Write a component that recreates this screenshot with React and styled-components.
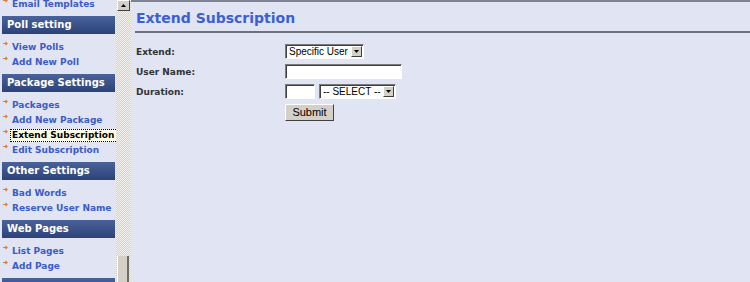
import React from 'react';
import styled, { createGlobalStyle } from 'styled-components';

const GlobalStyle = createGlobalStyle`
  html, body {
    margin: 0;
    padding: 0;
    background: #e0e4f3;
    font-family: "DejaVu Sans", Verdana, sans-serif;
  }
`;

const Page = styled.div`
  display: flex;
  width: 750px;
  height: 282px;
  overflow: hidden;
  background: #e0e4f3;
`;

const SideFrame = styled.div`
  display: flex;
  width: 131px;
  flex-shrink: 0;
`;

const SideMenu = styled.div`
  width: 116px;
  overflow: hidden;
`;

const MenuInner = styled.div`
  margin-top: -3px;
`;

const Group = styled.div`
  padding-bottom: 4px;
`;

const GroupHeader = styled.div`
  margin-left: 2px;
  width: 113px;
  height: 18px;
  line-height: 18px;
  padding-left: 5px;
  box-sizing: border-box;
  background: linear-gradient(#4a629a, #2b4378);
  color: #fff;
  font-size: 10px;
  font-weight: bold;
  margin-bottom: 6px;
`;

const Item = styled.div`
  position: relative;
  height: 15px;
  line-height: 15px;
  padding-left: 12px;
  font-size: 9px;
  font-weight: bold;
  white-space: nowrap;
  color: ${p => (p.$active ? '#000' : '#3a5cc8')};
`;

const ItemLabel = styled.span`
  display: inline-block;
  line-height: 11px;
  padding: 0 3px 0 1px;
  margin-left: -2px;
  border: 1px dotted ${p => (p.$active ? '#000' : 'transparent')};
  background: ${p => (p.$active ? '#fffde6' : 'transparent')};
`;

const Bullet = styled.svg`
  position: absolute;
  left: 3px;
  top: 1px;
`;

const ScrollTrack = styled.div`
  width: 15px;
  display: flex;
  flex-direction: column;
  justify-content: space-between;
  background-color: #f4f3ef;
  background-image: conic-gradient(#d4d0c8 25%, transparent 0 50%, #d4d0c8 0 75%, transparent 0);
  background-size: 2px 2px;
`;

const ScrollButton = styled.div`
  width: 13px;
  height: 11px;
  margin-left: 1px;
  background: #d4d0c8;
  border: 1px solid;
  border-color: #fff #404040 #404040 #fff;
  box-sizing: border-box;
  display: flex;
  align-items: center;
  justify-content: center;
`;

const ScrollThumb = styled.div`
  width: 12px;
  height: 26px;
  margin-left: 1px;
  background: #d4d0c8;
  border-right: 2px solid #6e6c66;
  border-left: 1px solid #fff;
  box-sizing: border-box;
`;

const Main = styled.div`
  flex: 1;
  border-top: 2px solid #7e8393;
  padding: 0 0 0 4px;
`;

const Title = styled.h1`
  margin: 0;
  padding: 8px 0 5px 1px;
  font-size: 14px;
  font-weight: bold;
  color: #3d5fd6;
  border-bottom: 2px solid #6d717e;
`;

const Form = styled.div`
  display: grid;
  grid-template-columns: 150px auto;
  row-gap: 5px;
  align-items: center;
  padding: 11px 0 0 1px;
`;

const Label = styled.div`
  font-size: 9px;
  font-weight: bold;
  color: #333;
`;

const Controls = styled.div`
  display: flex;
  gap: 4px;
  align-items: center;
  margin-left: -1px;
`;

const SelectBox = styled.div`
  width: ${p => p.$w}px;
  height: 15px;
  box-sizing: border-box;
  background: #fff;
  border: 1px solid;
  border-color: #7a7a7a #fff #fff #7a7a7a;
  box-shadow: inset 1px 1px 0 #404040;
  display: flex;
  align-items: center;
  justify-content: space-between;
  font-family: "Liberation Sans", Arial, sans-serif;
  font-size: 10px;
  white-space: nowrap;
  overflow: hidden;
  color: #000;
  padding-left: 3px;
`;

const SelectArrow = styled.div`
  width: 11px;
  height: 11px;
  flex-shrink: 0;
  margin-right: 1px;
  background: #d4d0c8;
  border: 1px solid;
  border-color: #fff #404040 #404040 #fff;
  box-sizing: border-box;
  display: flex;
  align-items: center;
  justify-content: center;
`;

const TextBox = styled.div`
  width: ${p => p.$w}px;
  height: 15px;
  box-sizing: border-box;
  background: #fff;
  border: 1px solid;
  border-color: #7a7a7a #fff #fff #7a7a7a;
  box-shadow: inset 1px 1px 0 #404040;
`;

const Button = styled.div`
  width: 49px;
  height: 17px;
  box-sizing: border-box;
  background: #d4d0c8;
  border: 1px solid;
  border-color: #fff #404040 #404040 #fff;
  font-family: "Liberation Sans", Arial, sans-serif;
  font-size: 11px;
  text-align: center;
  line-height: 15px;
  color: #000;
`;

const Arrow = ({ up }) => (
  <svg width="5" height="3" viewBox="0 0 5 3">
    <path d={up ? 'M2.5 0L5 3H0Z' : 'M0 0H5L2.5 3Z'} fill="#000" />
  </svg>
);

const menu = [
  { items: ['Email Templates'] },
  { title: 'Poll setting', items: ['View Polls', 'Add New Poll'] },
  {
    title: 'Package Settings',
    items: ['Packages', 'Add New Package', 'Extend Subscription', 'Edit Subscription'],
  },
  { title: 'Other Settings', items: ['Bad Words', 'Reserve User Name'] },
  { title: 'Web Pages', items: ['List Pages', 'Add Page'] },
  { title: '', items: [] },
];

const App = () => (
  <>
    <GlobalStyle />
    <Page>
      <SideFrame>
        <SideMenu>
          <MenuInner>
            {menu.map((g, i) => (
              <Group key={i}>
                {g.title !== undefined && <GroupHeader>{g.title}</GroupHeader>}
                {g.items.map(it => {
                  const active = it === 'Extend Subscription';
                  return (
                    <Item key={it} $active={active}>
                      <Bullet width="5" height="5" viewBox="0 0 5 5">
                        <path d="M0 2.5H4M2.5 1L4 2.5L2.5 4" stroke="#ea7a2a" strokeWidth="1.2" fill="none" />
                      </Bullet>
                      <ItemLabel $active={active}>{it}</ItemLabel>
                    </Item>
                  );
                })}
              </Group>
            ))}
          </MenuInner>
        </SideMenu>
        <ScrollTrack>
          <ScrollButton>
            <Arrow up />
          </ScrollButton>
          <ScrollThumb />
        </ScrollTrack>
      </SideFrame>
      <Main>
        <Title>Extend Subscription</Title>
        <Form>
          <Label>Extend:</Label>
          <Controls>
            <SelectBox $w={79}>
              Specific User
              <SelectArrow>
                <Arrow />
              </SelectArrow>
            </SelectBox>
          </Controls>
          <Label>User Name:</Label>
          <Controls>
            <TextBox $w={117} />
          </Controls>
          <Label>Duration:</Label>
          <Controls>
            <TextBox $w={30} />
            <SelectBox $w={77}>
              -- SELECT --
              <SelectArrow>
                <Arrow />
              </SelectArrow>
            </SelectBox>
          </Controls>
          <span />
          <Controls>
            <Button>Submit</Button>
          </Controls>
        </Form>
      </Main>
    </Page>
  </>
);

export default App;
